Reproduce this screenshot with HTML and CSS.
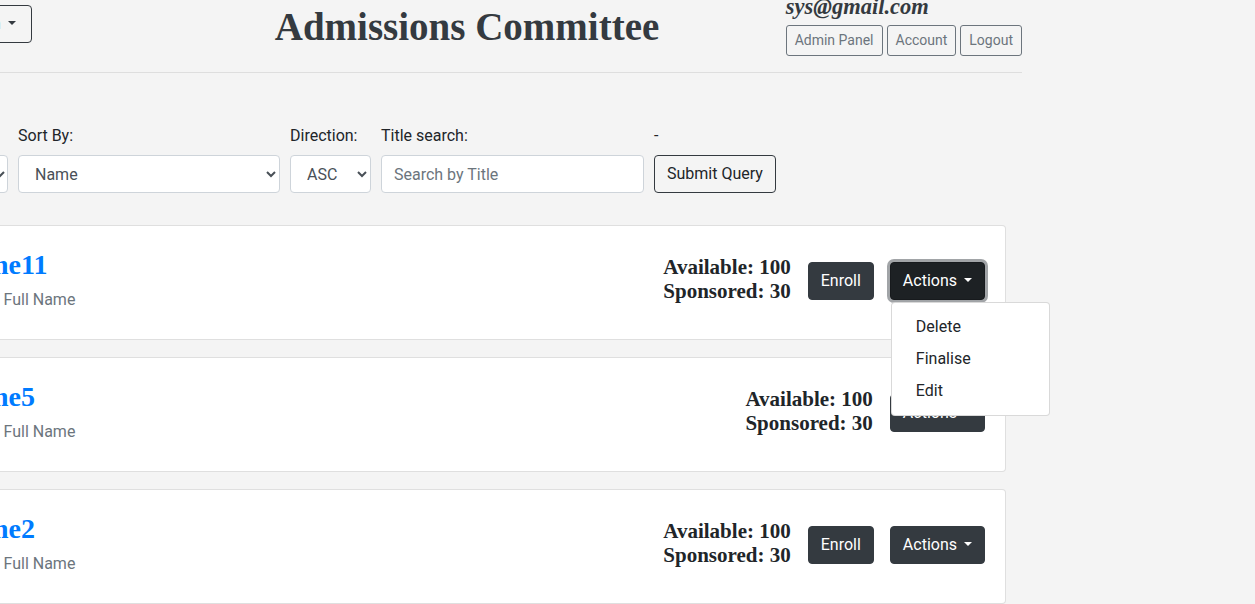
FILE: index.html
```html
<!DOCTYPE html>
<html lang="en">
<head>
<meta charset="utf-8">
<title>Admissions Committee</title>
<link rel="stylesheet" href="styles.css">
</head>
<body>
<div class="page">
  <header class="topbar">
    <div class="nav-left">
      <button class="btn btn-outline-dark btn-nav dropdown-toggle" type="button">Admission</button>
    </div>
    <h1 class="site-title">Admissions Committee</h1>
    <div class="user-box">
      <div class="email">sys@gmail.com</div>
      <div class="user-actions">
        <button class="btn btn-sm btn-outline-secondary" type="button">Admin Panel</button>
        <button class="btn btn-sm btn-outline-secondary" type="button">Account</button>
        <button class="btn btn-sm btn-outline-secondary" type="button">Logout</button>
      </div>
    </div>
  </header>

  <form class="filters">
    <div class="field f-first">
      <label class="field-label">Filter:</label>
      <select class="control"><option>All</option></select>
    </div>
    <div class="field f-sort">
      <label class="field-label">Sort By:</label>
      <select class="control"><option>Name</option></select>
    </div>
    <div class="field f-dir">
      <label class="field-label">Direction:</label>
      <select class="control"><option>ASC</option></select>
    </div>
    <div class="field f-search">
      <label class="field-label">Title search:</label>
      <input class="control" type="text" placeholder="Search by Title">
    </div>
    <div class="field">
      <label class="field-label">-</label>
      <button class="btn btn-outline-dark btn-submit" type="button">Submit Query</button>
    </div>
  </form>

  <div class="list">
    <div class="card">
      <div class="card-main">
        <h3 class="card-title">Name11</h3>
        <p class="card-subtitle">Cohort Full Name</p>
      </div>
      <div class="card-actions">
        <div class="info">Available: 100<br>Sponsored: 30</div>
        <button class="btn btn-dark" type="button">Enroll</button>
        <div class="dropdown">
          <button class="btn btn-dark dropdown-toggle is-active" type="button">Actions</button>
          <div class="dropdown-menu">
            <a class="dropdown-item">Delete</a>
            <a class="dropdown-item">Finalise</a>
            <a class="dropdown-item">Edit</a>
          </div>
        </div>
      </div>
    </div>

    <div class="card">
      <div class="card-main">
        <h3 class="card-title">Name5</h3>
        <p class="card-subtitle">Cohort Full Name</p>
      </div>
      <div class="card-actions">
        <div class="info">Available: 100<br>Sponsored: 30</div>
        <div class="dropdown">
          <button class="btn btn-dark dropdown-toggle" type="button">Actions</button>
        </div>
      </div>
    </div>

    <div class="card">
      <div class="card-main">
        <h3 class="card-title">Name2</h3>
        <p class="card-subtitle">Cohort Full Name</p>
      </div>
      <div class="card-actions">
        <div class="info">Available: 100<br>Sponsored: 30</div>
        <button class="btn btn-dark" type="button">Enroll</button>
        <div class="dropdown">
          <button class="btn btn-dark dropdown-toggle" type="button">Actions</button>
        </div>
      </div>
    </div>
  </div>
</div>
</body>
</html>
```

FILE: styles.css
```css
* { box-sizing: border-box; }

html, body {
  margin: 0;
  overflow: hidden;
}

body {
  background: #f4f4f4;
  font-family: Roboto, "Liberation Sans", sans-serif;
  font-size: 16px;
  line-height: 1.5;
  color: #212529;
}

/* the page is shown scrolled: its left and top edges lie outside the window */
.page {
  width: 1110px;
  margin-left: -88px;
  margin-top: -10px;
}

/* ---------- buttons ---------- */
.btn {
  display: inline-block;
  font-family: Roboto, "Liberation Sans", sans-serif;
  font-size: 16px;
  line-height: 24px;
  padding: 6px 12px;
  border: 1px solid transparent;
  border-radius: 4px;
  background: transparent;
  color: #212529;
  white-space: nowrap;
  cursor: pointer;
}

.btn-sm {
  font-size: 14px;
  line-height: 21px;
  padding: 4px 8px;
  border-radius: 3px;
}

.btn-outline-dark {
  border-color: #343a40;
  color: #343a40;
}

.btn-submit {
  color: #212529;
}

.btn-nav {
  padding: 6px 15px 6px 12px;
}

.btn-outline-secondary {
  border-color: #6c757d;
  color: #6c757d;
}

.btn-dark {
  background: #343a40;
  border-color: #343a40;
  color: #fff;
}

.btn-dark.is-active {
  background: #1d2124;
  border-color: #171a1d;
  box-shadow: 0 0 0 3px rgba(130, 134, 138, 0.75);
}

.dropdown-toggle::after {
  content: "";
  display: inline-block;
  margin-left: 7px;
  vertical-align: 4px;
  border-top: 4px solid currentColor;
  border-left: 4px solid transparent;
  border-right: 4px solid transparent;
}

/* ---------- header ---------- */
.topbar {
  display: grid;
  grid-template-columns: 1fr auto 1fr;
  align-items: start;
  padding: 4px 0 16px;
  border-bottom: 1px solid #dedede;
}

.nav-left {
  margin-top: 11px;
}

.site-title {
  margin: 9px 0 0;
  font-family: "Liberation Serif", "DejaVu Serif", serif;
  font-weight: 700;
  font-size: 39px;
  line-height: 48px;
  color: #343a40;
}

.user-box {
  justify-self: end;
}

.email {
  font-family: "Liberation Serif", "DejaVu Serif", serif;
  font-style: italic;
  font-weight: 700;
  font-size: 22.5px;
  line-height: 26px;
  color: #343a40;
  margin-bottom: 5px;
}

.user-actions {
  display: flex;
  gap: 4px;
}

/* ---------- filters ---------- */
.filters {
  display: flex;
  align-items: flex-end;
  gap: 10px;
  margin-top: 50px;
}

.field-label {
  display: block;
  line-height: 24px;
  margin: 1px 0 7px;
}

.control {
  display: block;
  width: 100%;
  height: 38px;
  padding: 6px 12px;
  font-family: Roboto, "Liberation Sans", sans-serif;
  font-size: 16px;
  line-height: 24px;
  color: #495057;
  background: #fff;
  border: 1px solid #ced4da;
  border-radius: 4px;
}

.control::placeholder {
  color: #6c757d;
}

.f-first { width: 96px; }
.f-sort { width: 262px; }
.f-dir { width: 81px; }
.f-search { width: 263px; }

/* ---------- cards ---------- */
.list {
  margin-top: 32px;
  padding: 0 16px 0 18px;
}

.card {
  position: relative;
  display: flex;
  justify-content: space-between;
  height: 115px;
  margin-bottom: 17px;
  padding: 0 20px;
  background: #fff;
  border: 1px solid rgba(0, 0, 0, 0.125);
  border-radius: 4px;
}

.card-main {
  padding-top: 22px;
}

.card-title {
  margin: 0;
  font-family: "Liberation Serif", "DejaVu Serif", serif;
  font-weight: 700;
  font-size: 28px;
  line-height: 34px;
  color: #007bff;
}

.card-subtitle {
  margin: 6px 0 0;
  line-height: 24px;
  color: #6c757d;
}

.card-actions {
  align-self: center;
  display: flex;
  align-items: center;
  gap: 16px;
  margin-bottom: 3px;
}

.info {
  margin: 0 1px 4px 0;
  font-family: "Liberation Serif", "DejaVu Serif", serif;
  font-weight: 700;
  font-size: 21px;
  line-height: 24px;
  text-align: center;
  color: #212529;
}

.dropdown {
  position: relative;
}

.dropdown-menu {
  position: absolute;
  top: 100%;
  left: 1px;
  z-index: 1000;
  min-width: 159px;
  margin-top: 2px;
  padding: 8px 0;
  background: #fff;
  border: 1px solid rgba(0, 0, 0, 0.15);
  border-radius: 4px;
}

.dropdown-item {
  display: block;
  padding: 4px 24px;
  line-height: 24px;
  color: #212529;
}
```
